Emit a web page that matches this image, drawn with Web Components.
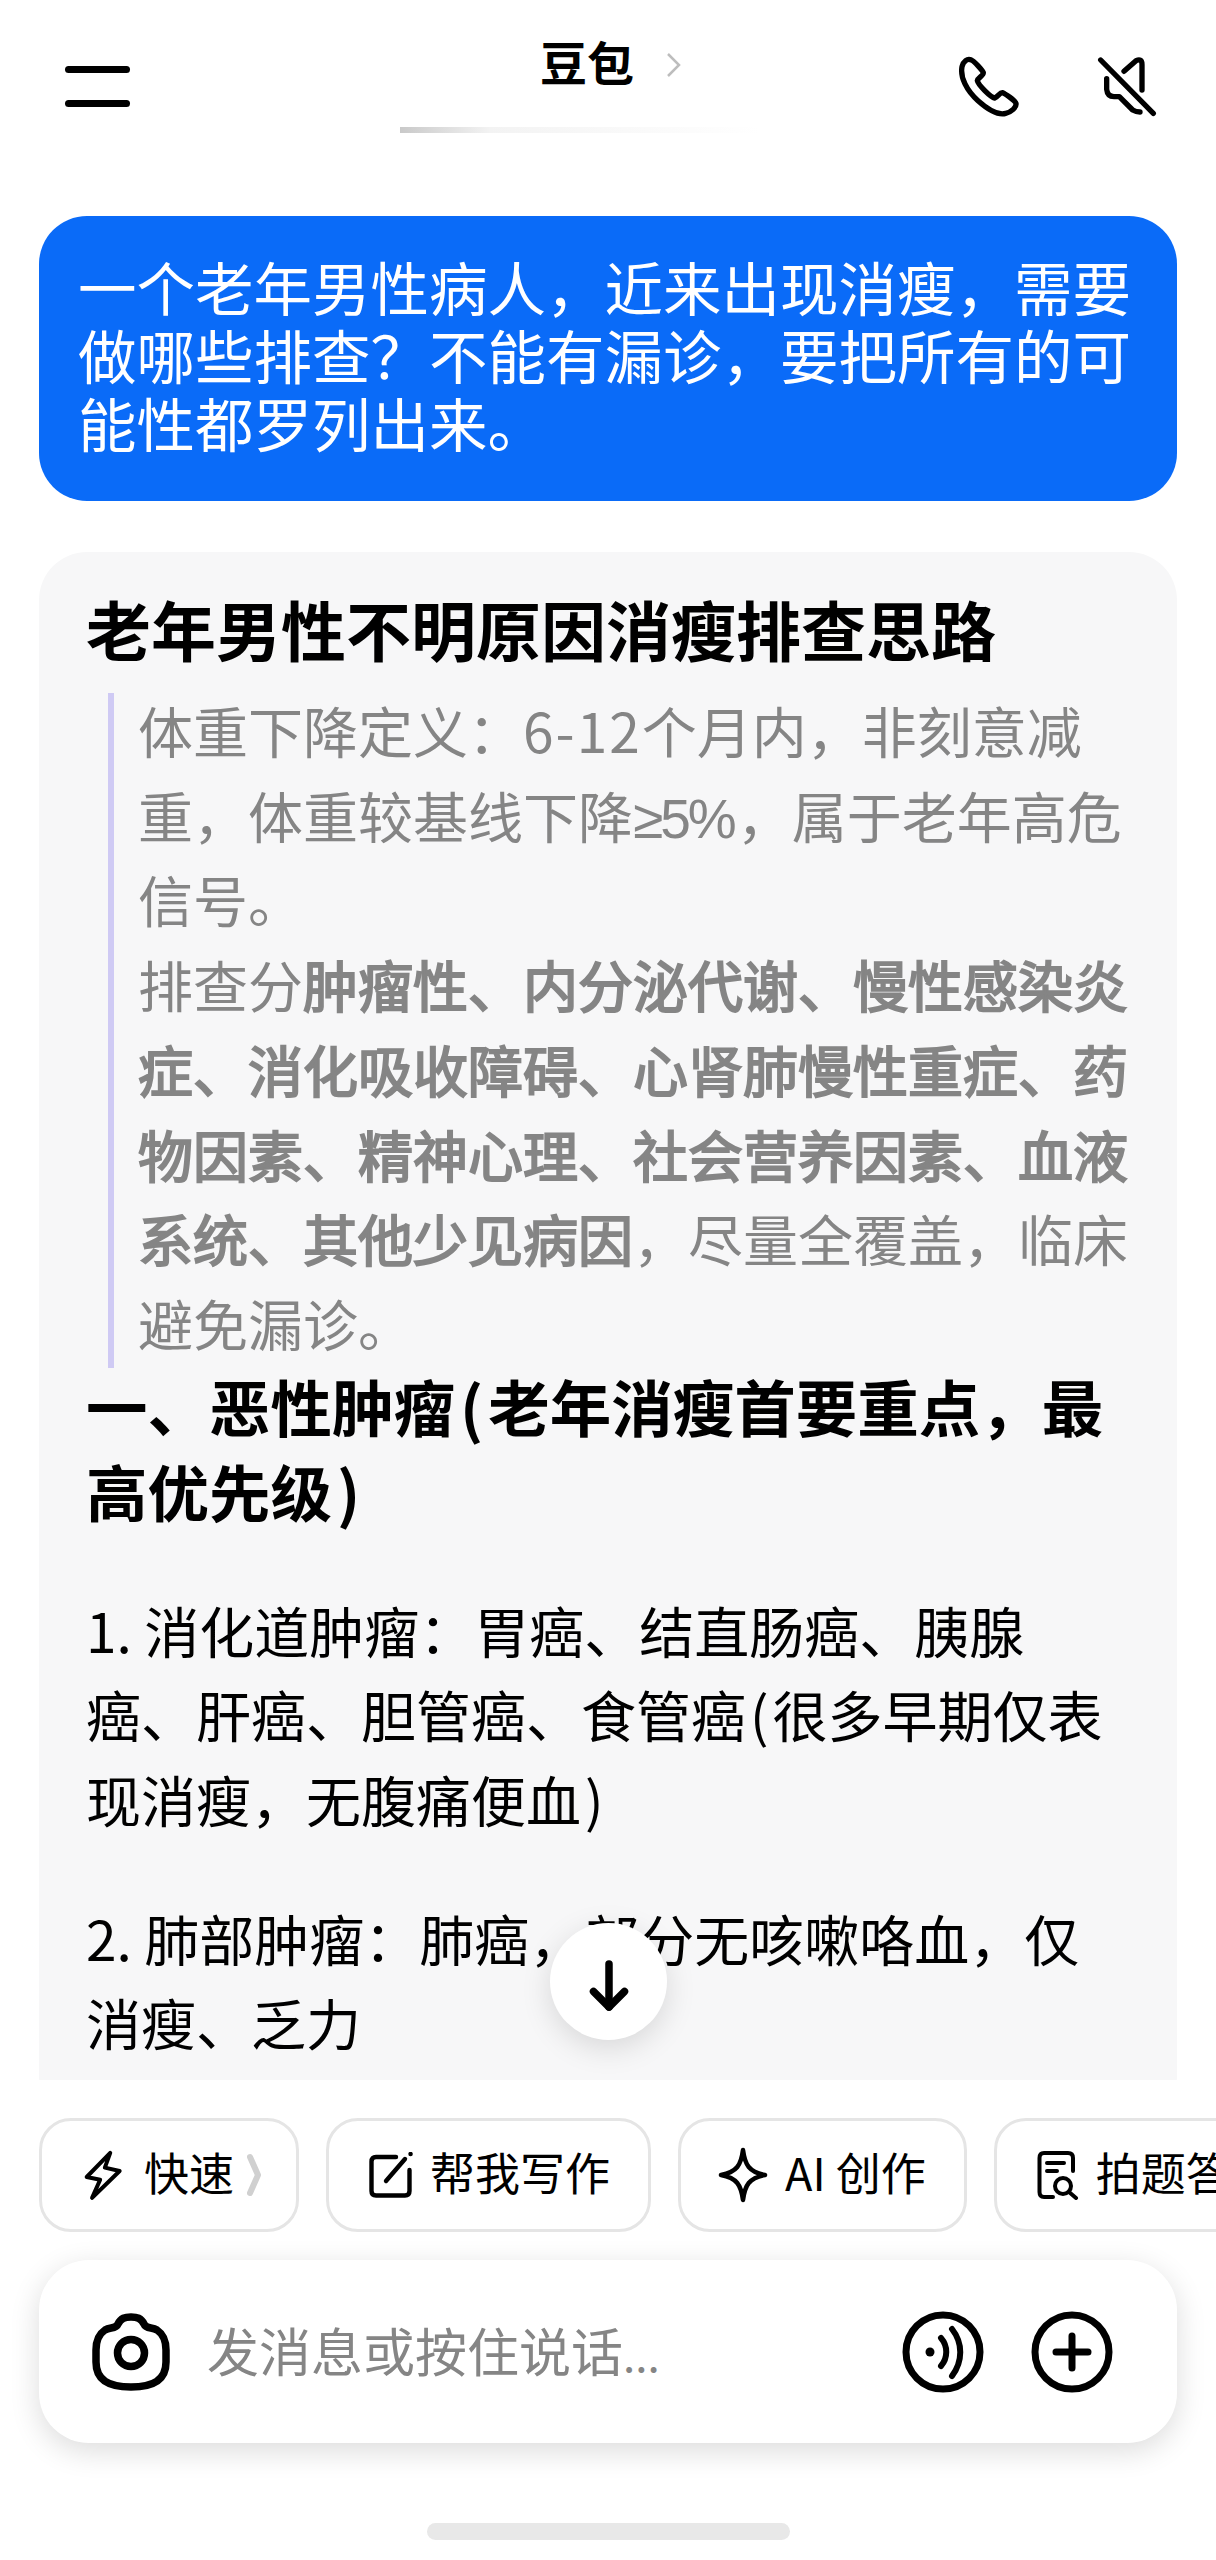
<!doctype html>
<html lang="zh">
<head>
<meta charset="utf-8">
<title>豆包</title>
<style>
html, body { margin: 0; background: #fff; }
body { font-family: "Noto Sans CJK SC", "Noto Sans", sans-serif; color: #000; }
/* latin bits the CJK font sets too narrow */
.lat { line-height: 0; }
.num { letter-spacing: 2px; }
.ge { font-family: "Liberation Sans", sans-serif; letter-spacing: -3px; margin-right: 3px; }
.par { line-height: 0; padding: 0 4px; }
h2 .par { padding: 0 5px; }
/* no medium cut installed, thicken the regular one */
note-quote b { font-weight: 400; -webkit-text-stroke: 2px #858585; }
</style>
</head>
<body>
<chat-app>
  <top-bar slot="top" title="豆包"></top-bar>
  <user-bubble>一个老年男性病人，近来出现消瘦，需要做哪些排查？不能有漏诊，要把所有的可能性都罗列出来。</user-bubble>
  <answer-card>
    <h1>老年男性不明原因消瘦排查思路</h1>
    <note-quote>
      <div>体重下降定义：<span class="lat num">6-12</span>个月内，非刻意减重，体重较基线下降<span class="lat ge">≥5%</span>，属于老年高危<br>信号。</div>
      <div>排查分<b>肿瘤性、内分泌代谢、慢性感染炎症、消化吸收障碍、心肾肺慢性重症、药物因素、精神心理、社会营养因素、血液系统、其他少见病因</b>，尽量全覆盖，临床避免漏诊。</div>
    </note-quote>
    <h2>一、恶性肿瘤<span class="par">(</span>老年消瘦首要重点，最高优先级<span class="par">)</span></h2>
    <p>1. 消化道肿瘤：胃癌、结直肠癌、胰腺<br>癌、肝癌、胆管癌、食管癌<span class="par">(</span>很多早期仅表现消瘦，无腹痛便血<span class="par">)</span></p>
    <p>2. 肺部肿瘤：肺癌，部分无咳嗽咯血，仅消瘦、乏力</p>
  </answer-card>
  <scroll-down slot="over"></scroll-down>
  <chip-row slot="bottom">
    <quick-chip icon="bolt" more>快速</quick-chip>
    <quick-chip icon="edit">帮我写作</quick-chip>
    <quick-chip icon="star">AI 创作</quick-chip>
    <quick-chip icon="scan">拍题答疑</quick-chip>
  </chip-row>
  <input-bar slot="bottom"></input-bar>
  <home-bar slot="bottom"></home-bar>
</chat-app>

<script>
// all icons drawn in the coordinates of their zoomed crops
const ICONS = {
  bolt: `<svg width="42" height="54" viewBox="130 90 125 160" fill="none" stroke="#000" stroke-width="12" stroke-linejoin="round" stroke-linecap="round"><path d="M214 104 L144 176 L184 184 L160 238 L242 158 L198 148 Z"/></svg>`,
  edit: `<svg width="44" height="46" viewBox="0 0 44 46" fill="none" stroke="#000" stroke-width="4.4" stroke-linecap="round" stroke-linejoin="round"><path d="M27 5 H7 Q2.5 5 2.5 9.5 V39 Q2.5 43.500 7 43.500 H36 Q40.500 43.500 40.500 39 V18"/><path d="M17 29 L36 7"/><path d="M41.500 2 L41.600 2"/></svg>`,
  star: `<svg width="50" height="56" viewBox="0 0 50 56" fill="none" stroke="#000" stroke-width="4.500" stroke-linejoin="round"><path d="M25 3 C27 18 31 25 47 28 C31 31 27 38 25 53 C23 38 19 31 3 28 C19 25 23 18 25 3 Z"/></svg>`,
  scan: `<svg width="42" height="50" viewBox="0 0 42 50" fill="none" stroke="#000" stroke-width="4" stroke-linecap="round" stroke-linejoin="round"><path d="M16 47 H7 Q2.500 47 2.500 42 V8 Q2.500 3 7 3 H31 Q36 3 36 8 V21"/><path d="M10 13 H27 M10 21 H20"/><circle cx="26" cy="36" r="8"/><path d="M32 42 L39 48"/></svg>`,
  phone: `<svg width="70" height="66" viewBox="40 40 210 198" fill="none" stroke="#000" stroke-width="16" stroke-linejoin="round"><path d="M92 58 C80 52 68 62 64 78 C58 110 78 150 112 180 C140 205 170 225 195 218 C212 214 228 200 226 188 C224 180 192 158 186 156 C178 154 172 168 162 172 C150 170 112 132 110 120 C112 110 128 106 128 96 C126 90 100 60 92 58 Z"/></svg>`,
  mute: `<svg width="70" height="66" viewBox="462 40 210 198" fill="none" stroke="#000" stroke-width="16" stroke-linecap="round" stroke-linejoin="round"><path d="M482 58 L640 218"/><path d="M552 92 L588 60 Q606 52 606 72 V148"/><path d="M500 114 V146 Q502 168 522 168 H538 L578 208 Q588 214 600 214"/></svg>`,
  camera: `<svg width="80" height="80" viewBox="0 0 80 80" fill="none" stroke="#000" stroke-width="7.500"><path d="M27 12 C30 6 34 5 40 5 C46 5 50 6 53 12 C55 17 61 15 66 18 C72 22 75 28 75 38 V50 C75 68 62 75 40 75 C18 75 5 68 5 50 V38 C5 28 8 22 14 18 C19 15 25 17 27 12 Z" stroke-linejoin="round"/><circle cx="40" cy="41" r="13.500"/></svg>`,
  voice: `<svg width="82" height="82" viewBox="0 0 82 82" fill="none" stroke="#000" stroke-linecap="round"><circle cx="41" cy="41" r="37" stroke-width="7"/><circle cx="28" cy="41" r="4.500" fill="#000" stroke="none"/><path d="M39 27 C46 35 46 47 39 55" stroke-width="6"/><path d="M50 18 C61 32 61 50 50 65" stroke-width="6"/></svg>`,
  plus: `<svg width="82" height="82" viewBox="0 0 82 82" fill="none" stroke="#000" stroke-linecap="round"><circle cx="41" cy="41" r="37" stroke-width="7"/><path d="M41 25 V57 M25 41 H57" stroke-width="7"/></svg>`,
  down: `<svg width="48" height="56" viewBox="0 0 48 56" fill="none" stroke="#000" stroke-width="7.500" stroke-linecap="round" stroke-linejoin="round"><path d="M24 7 V50"/><path d="M8.500 34.500 L24 50 L39.500 34.500"/></svg>`,
}

function define(tag, css, html){
  customElements.define(tag, class extends HTMLElement {
    constructor(){
      super()
      const shadow = this.attachShadow({ mode: 'open' })
      shadow.innerHTML = `<style>${css}</style>` + (typeof html === 'function' ? html(this) : html)
    }
  })
}

define('chat-app', `
  :host{ display:block; position:relative; width:1216px; height:2560px; overflow:hidden; background:#fff; }
  .page{ display:flex; flex-direction:column; height:100%; }
  .chat{ flex:1; min-height:0; overflow:hidden; padding:0 39px; display:flex; flex-direction:column; gap:51px; }
  .foot{ flex:none; background:#fff; }
`, `<div class="page">
  <slot name="top"></slot>
  <div class="chat"><slot></slot></div>
  <div class="foot"><slot name="bottom"></slot></div>
</div><slot name="over"></slot>`)

define('top-bar', `
  :host{ display:grid; grid-template-columns:1fr auto 1fr; height:216px; box-sizing:border-box; padding:33px 52px 0 65px; flex:none; }
  .menu{ display:flex; flex-direction:column; justify-content:space-between; width:65px; height:41px; margin-top:33px; }
  .menu i{ display:block; height:7px; background:#000; border-radius:4px; }
  .mid{ display:flex; flex-direction:column; align-items:center; }
  .name{ display:flex; align-items:center; gap:32px; height:56px; margin-left:-8px; font:700 47px/56px "Noto Sans CJK SC",sans-serif; }
  .name svg{ margin-top:7px; }
  .fade{ width:360px; height:6px; margin:38px 0 0 -70px; background:linear-gradient(90deg,#c9c9c9,#f3f3f3 25%,#fff); }
  .acts{ display:flex; justify-content:flex-end; gap:70px; padding-top:21px; }
`, (el) => `<div class="menu"><i></i><i></i></div>
  <div class="mid"><div class="name"><span>${el.getAttribute('title') || ''}</span><svg width="15" height="26" viewBox="0 0 15 26" fill="none" stroke="#bdbdbd" stroke-width="2.500"><path d="M2 2 L13 13 L2 24"/></svg></div><div class="fade"></div></div>
  <div class="acts">${ICONS.phone}${ICONS.mute}</div>`)

define('user-bubble', `
  :host{ display:block; flex:none; background:#0a6bf8; color:#fff; border-radius:48px; padding:36px 40px 45px 39px; font-size:58.5px; line-height:68px; }
`, `<slot></slot>`)

define('answer-card', `
  :host{ display:block; flex:none; background:#f7f7f8; border-radius:48px; padding:34px 47px 60px; font-size:55px; line-height:84.7px; }
  ::slotted(h1){ margin:0 0 22px; font-size:65px; line-height:85px; font-weight:700; }
  ::slotted(h2){ margin:-5px 0 0; font-size:61.5px; line-height:85px; font-weight:700; }
  ::slotted(p){ margin:54px 0 0; }
`, `<slot></slot>`)

define('note-quote', `
  :host{ display:block; margin-left:22px; border-left:6px solid #cfcaf4; padding:1px 0 3px 24px; color:#858585; }
  ::slotted(div:first-child){ margin-top:-7px; }
`, `<slot></slot>`)

define('scroll-down', `
  :host{ position:absolute; left:550px; top:1923px; width:117px; height:117px; border-radius:50%; background:#fff; box-shadow:0 8px 30px rgba(0,0,0,.13); display:flex; align-items:center; justify-content:center; }
  svg{ margin-top:6px; }
`, ICONS.down)

define('chip-row', `
  :host{ display:flex; gap:27px; padding:38px 0 0 39px; overflow:hidden; }
`, `<slot></slot>`)

define('quick-chip', `
  :host{ display:flex; flex:none; align-items:center; height:114px; box-sizing:border-box; padding:0 38px 0 40px; gap:17px; border:3.500px solid #e5e5e5; border-radius:32px; font-size:45px; line-height:54px; background:#fff; }
  :host([more]){ gap:20px; padding-right:35px; }
  :host([icon="star"]){ padding-left:37px; }
  span{ display:block; margin-top:-6px; }
  .more{ margin-left:-7px; }
`, (el) => `${ICONS[el.getAttribute('icon')] || ''}<span><slot></slot></span>${el.hasAttribute('more') ? `<svg class="more" width="14" height="44" viewBox="0 0 14 44" fill="none" stroke="#d0d0d0" stroke-width="6" stroke-linecap="round" stroke-linejoin="round"><path d="M3 4 L11 22 L3 40"/></svg>` : ''}`)

define('input-bar', `
  :host{ display:flex; align-items:center; height:183px; box-sizing:border-box; margin:28px 39px 0; padding:0 64px 0 52px; background:#fff; border-radius:50px; box-shadow:0 8px 30px rgba(0,0,0,.14); }
  .hint{ flex:1; margin-left:36px; font-size:52px; line-height:70px; color:#858585; }
  .hint small{ font-size:44px; }
  .btns{ display:flex; gap:47px; }
`, `${ICONS.camera}<div class="hint">发消息或按住说话<small>...</small></div><div class="btns">${ICONS.voice}${ICONS.plus}</div>`)

define('home-bar', `
  :host{ display:block; width:363px; height:17px; margin:80px auto 20px; background:#e8e8e8; border-radius:9px; }
`, ``)
</script>
</body>
</html>
